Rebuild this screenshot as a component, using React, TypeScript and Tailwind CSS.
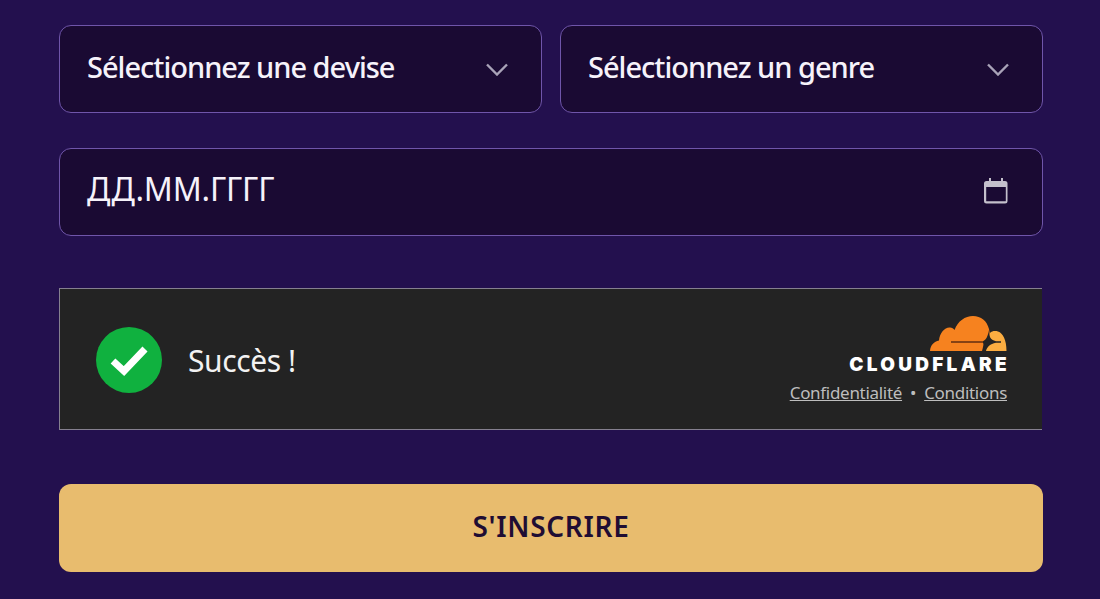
const SelectBox = ({ label }: { label: string }) => (
  <div className="flex h-[88px] flex-1 items-center justify-between rounded-[12px] border border-[#6f55aa] bg-[#1a0a33] pl-[27px] pr-[33px]">
    <span className="relative top-[-2px] font-['Noto_Sans',sans-serif] text-[29px] font-medium tracking-[-1px] text-[#f6f2fa]">{label}</span>
    <svg width="22" height="13" viewBox="0 0 22 13" fill="none" stroke="#a9a3b8" strokeWidth="2.4">
      <path d="M1 1.500l10 10 10-10" />
    </svg>
  </div>
);

const CalendarIcon = () => (
  <svg width="24" height="26" viewBox="0 0 24 26" className="relative top-[-1px] text-[#c4c0cc]" fill="currentColor">
    <path d="M5 0h2v3h10V0h2v3h2a2.500 2.500 0 0 1 2.500 2.500v17.500a2.500 2.500 0 0 1-2.500 2.500H2.500A2.500 2.500 0 0 1 0 23V5.500A2.500 2.500 0 0 1 2.500 3H5V0zM2.200 9v14c0 .2.1.3.3.3h19c.2 0 .3-.1.3-.3V9H2.200z" />
  </svg>
);

const CloudflareLogo = () => (
  <svg width="77" height="35" viewBox="0 0 77 35">
    <path fill="#fbad41" d="M54 35L60 17C62 15 65 14.500 68 15.500C73 17 76.500 24 76.500 35Z" />
    <path
      fill="#f6821f"
      d="M0 35C.5 29 4 25.500 9 24.500C9.500 17 15 11 20 11.500C22 11.800 23.500 12.500 24.500 14C28 5 35 0 43 0C51 0 57 5 59 13L60 19L55 26L53 35Z"
    />
    <path
      fill="#232323"
      d="M59 14C59 20 60 24 66 25.200L71 25.200L71 26.800L66 26.800C60 28 57 31 56 35L52 35C53 31 54 28 53 26.800L53 25.200C56 24 58 20 59 14Z"
    />
    <path fill="#6b3312" d="M21 25.200H53V26.800H21Z" />
  </svg>
);

const App = () => {
  return (
    <div className="flex h-[599px] w-[1100px] flex-col overflow-hidden bg-[#23104e] pl-[59px] pr-[57px] pt-[25px]">
      <div className="flex gap-[18px]">
        <SelectBox label="Sélectionnez une devise" />
        <SelectBox label="Sélectionnez un genre" />
      </div>

      <div className="mt-[35px] flex h-[88px] items-center justify-between rounded-[12px] border border-[#6f55aa] bg-[#1a0a33] pl-[27px] pr-[34px]">
        <span className="relative top-[-3px] font-['Noto_Sans',sans-serif] text-[32px] tracking-[-0.2px] text-[#f6f2fa]">ДД.ММ.ГГГГ</span>
        <CalendarIcon />
      </div>

      <div className="mr-px mt-[52px] flex h-[142px] items-center justify-between border border-r-0 border-[#85808f] bg-[#232323] pl-[36px] pr-[35px] pt-[2px]">
        <div className="flex items-center gap-[26px]">
          <div className="flex h-[66px] w-[66px] items-center justify-center rounded-full bg-[#10b13f]">
            <svg width="40" height="32" viewBox="0 0 40 32">
              <path d="M4 17l11 10L36 5" fill="none" stroke="#fff" strokeWidth="7" />
            </svg>
          </div>
          <span className="font-['Noto_Sans',sans-serif] text-[30px] tracking-[-0.4px] text-[#f2f2f2]">Succès !</span>
        </div>
        <div className="flex flex-col items-end">
          <div className="relative top-[-1px]">
            <CloudflareLogo />
          </div>
          <span className="mr-[-3px] mt-[4px] font-['Inter',sans-serif] text-[19px] leading-[18px] font-black tracking-[3.300px] text-white">CLOUDFLARE</span>
          <div className="mt-[9px] flex items-center gap-[8px] font-['Noto_Sans',sans-serif] text-[17px] leading-[20px] tracking-[-0.3px] text-[#bdbdbd]">
            <span className="underline">Confidentialité</span>
            <span>•</span>
            <span className="underline">Conditions</span>
          </div>
        </div>
      </div>

      <button className="mt-[54px] flex h-[88px] items-center justify-center rounded-[12px] bg-[#e8bc6e]">
        <span className="relative top-[-2px] font-['Noto_Sans',sans-serif] text-[28px] font-semibold tracking-[0.7px] text-[#1f0d33]">S'INSCRIRE</span>
      </button>
    </div>
  );
};

export default App;
